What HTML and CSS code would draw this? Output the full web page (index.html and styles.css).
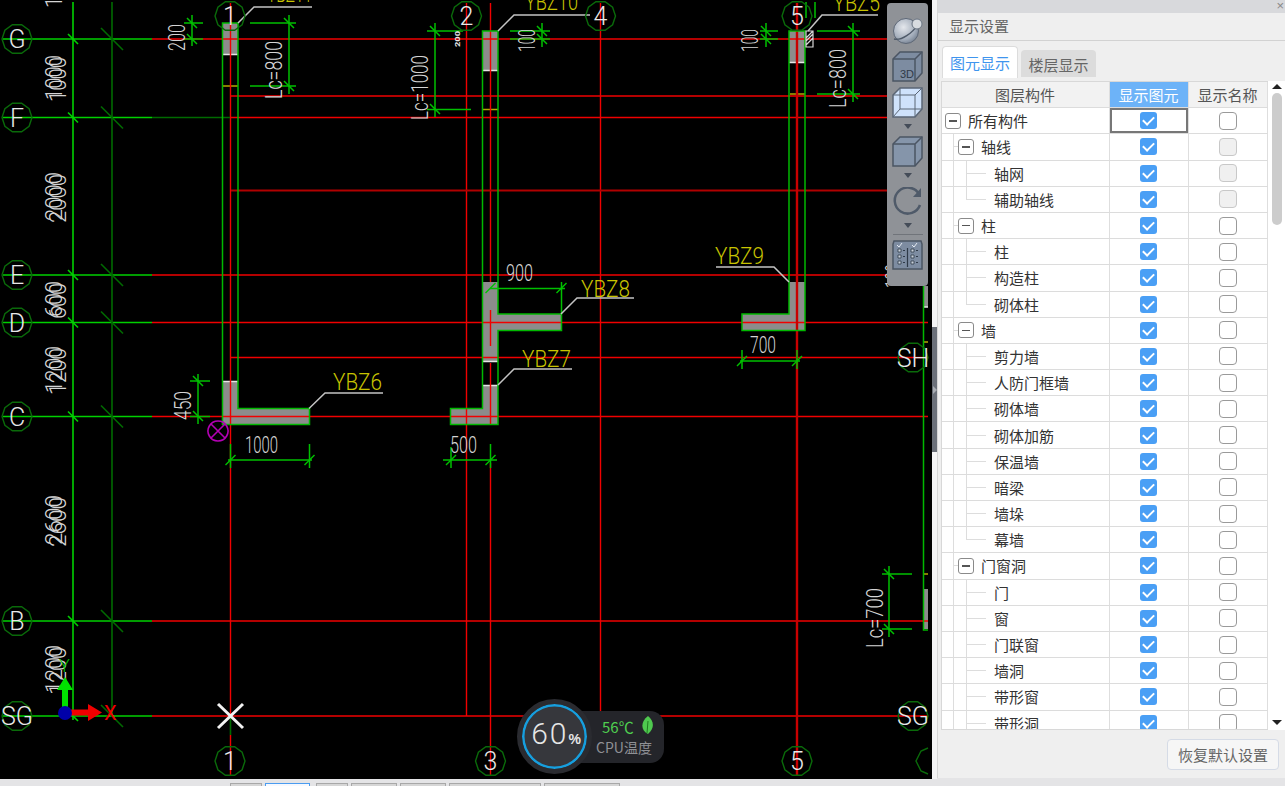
FILE: index.html
```html
<!DOCTYPE html>
<html lang="zh">
<head>
<meta charset="utf-8">
<title>显示设置</title>
<link rel="stylesheet" href="styles.css">
</head>
<body>
<div class="main">
  <div class="canvas">
    <svg class="cad" width="932" height="779" viewBox="0 0 932 779">
      <defs>
        <polygon id="ax" points="15,0 12.1,8.8 4.6,14.3 -4.6,14.3 -12.1,8.8 -15,0 -12.1,-8.8 -4.6,-14.3 4.6,-14.3 12.1,-8.8"/>
        <path id="tb" d="M-5-5 5 5"/>
        <path id="tf" d="M-5 5 5-5"/>
        <path id="tl" d="M-11-11 11 11"/>
      </defs>

      <g class="gray">
        <rect x="223" y="23" width="15" height="32"/>
        <polygon points="223,381 238,381 238,408.5 309,408.5 309,424 223,424"/>
        <rect x="483" y="31" width="15" height="40"/>
        <polygon points="483,282 498,282 498,314 561,314 561,330 498,330 498,361 483,361"/>
        <polygon points="483,385 498,385 498,424 451,424 451,409 483,409"/>
        <rect x="789" y="31" width="16" height="32"/>
        <polygon points="789,282 805,282 805,330 742,330 742,314 789,314"/>
        <rect x="924" y="589" width="4" height="40"/>
        <rect x="924" y="286" width="4" height="21"/>
      </g>
      <path class="end" d="M223 54.500H238M223 381.500H238M483 70.500H498M483 361.500H498M483 385.500H498M789 62.500H805M924 307H928"/>
      <path class="yel-line" d="M223 86H238M483 109.500H498M790 94H805M924 342H928M924 574H928"/>

      <path class="red" d="M152 39H928M230 96H928M230 117.500H928M152 275H928M152 322.500H928M231 357.500H928M152 416.500H928M152 621H928M152 716H928M230.500 3V716M230.500 735V775M466.500 3V716M490.500 3V282M490.500 310V346M490.500 363V424M490.500 463V775M600.500 3V716"/>
      <path class="red-dark" d="M231 190.500H928"/>
      <path class="red-wide" d="M797 3V775"/>

      <path class="green" d="M3 39H152M3 117.500H152M3 275H152M3 322.500H152M3 416.500H152M3 621H152M3 716H152M73 2V720"/>
      <path class="green-dark" d="M112 2V716M152 117.500H230M230.500 716V735"/>
      <g class="green-dark">
        <use href="#tl" x="112" y="39"/><use href="#tl" x="112" y="117.500"/><use href="#tl" x="112" y="275"/><use href="#tl" x="112" y="322.500"/><use href="#tl" x="112" y="416.500"/><use href="#tl" x="112" y="621"/><use href="#tl" x="112" y="716"/>
      </g>
      <g class="green">
        <use href="#tb" x="73" y="39"/><use href="#tb" x="73" y="117.500"/><use href="#tb" x="73" y="275"/><use href="#tb" x="73" y="322.500"/><use href="#tb" x="73" y="416.500"/><use href="#tb" x="73" y="621"/><use href="#tb" x="73" y="716"/>
      </g>

      <path class="wall" d="M222.500 23V424.500H309.500V408.500H238V23ZM482.500 31H498V314H561.500V330.500H498V424.500H450.500V408.500H482.500ZM789 31V314H742V330.500H805V31ZM923.500 286V630H928"/>

      <path class="dim" d="M184 23H203M184 39H203M192 15V46M250 23H296M250 86H296M289 15V94M190 381H210M190 416.500H210M198 374V424M228 460H312M230.500 444V468M309.500 444V468M427 31H463M427 109.500H471M435 23V117M510 31H550M510 39H550M542 23V47M490 288.500H565M561.500 282V314M443 460H497M451 447V468M490.500 444V468M760 31H778M760 39H778M766 23V47M817 31H860M817 94H860M853 23V102M806 2V18M815 2V18M740 361H800M742 350V369M797 350V369M882 574H912M882 629H912M889 566V637"/>
      <g class="dim">
        <use href="#tb" x="192" y="23"/><use href="#tb" x="192" y="39"/><use href="#tb" x="289" y="23"/><use href="#tb" x="289" y="86"/><use href="#tb" x="198" y="381"/><use href="#tb" x="198" y="416"/>
        <use href="#tf" x="230.500" y="460"/><use href="#tf" x="309.500" y="460"/><use href="#tb" x="435" y="31"/><use href="#tb" x="435" y="109"/><use href="#tb" x="542" y="31"/><use href="#tb" x="542" y="39"/>
        <use href="#tf" x="490.500" y="288"/><use href="#tf" x="561.500" y="288"/><use href="#tf" x="451" y="460"/><use href="#tf" x="490.500" y="460"/><use href="#tb" x="766" y="31"/><use href="#tb" x="766" y="39"/>
        <use href="#tb" x="853" y="31"/><use href="#tb" x="853" y="94"/><use href="#tf" x="742" y="361"/><use href="#tf" x="797" y="361"/><use href="#tb" x="889" y="574"/><use href="#tb" x="889" y="629"/>
      </g>

      <path class="leader" d="M309 408.500 325 393H383M498 385 514 369H572M561 314 577 298H634M789 282 774 267H716M498 31 514 15H590M808 31 822 15H878M238 23 254 7H312"/>

      <g class="axis">
        <use href="#ax" x="230" y="16"/><use href="#ax" x="466.500" y="16"/><use href="#ax" x="600.500" y="16"/><use href="#ax" x="797" y="16"/>
        <use href="#ax" x="230" y="761"/><use href="#ax" x="490.500" y="761"/><use href="#ax" x="797" y="761"/>
        <use href="#ax" x="17" y="39"/><use href="#ax" x="17" y="117.500"/><use href="#ax" x="17" y="275"/><use href="#ax" x="17" y="322.500"/><use href="#ax" x="17" y="416.500"/><use href="#ax" x="17" y="621"/><use href="#ax" x="17" y="716"/>
        <use href="#ax" x="913" y="357.500"/><use href="#ax" x="913" y="716"/>
        <path d="M928 748 921 751 916 761 921 771 928 774"/>
      </g>

      <g class="lab">
        <text x="230" y="25">1</text><text x="466.500" y="25">2</text><text x="600.500" y="25">4</text><text x="797" y="25">5</text>
        <text x="230" y="770">1</text><text x="490.500" y="770">3</text><text x="797" y="770">5</text>
        <text x="17" y="48">G</text><text x="17" y="126.500">F</text><text x="17" y="284">E</text><text x="17" y="331.500">D</text><text x="17" y="425.500">C</text><text x="17" y="630">B</text><text x="17" y="725">SG</text>
        <text x="913" y="366.500">SH</text><text x="913" y="725">SG</text>
      </g>

      <g class="txt">
        <text transform="translate(62,8) rotate(-90)" textLength="45" lengthAdjust="spacingAndGlyphs">1000</text>
        <text transform="translate(62,100) rotate(-90)" textLength="45" lengthAdjust="spacingAndGlyphs">1000</text>
        <text transform="translate(66,102) rotate(-90)" textLength="45" lengthAdjust="spacingAndGlyphs">1000</text>
        <text transform="translate(62,221) rotate(-90)" textLength="49" lengthAdjust="spacingAndGlyphs">2000</text>
        <text transform="translate(66,223) rotate(-90)" textLength="49" lengthAdjust="spacingAndGlyphs">2000</text>
        <text transform="translate(62,317) rotate(-90)" textLength="36" lengthAdjust="spacingAndGlyphs">600</text>
        <text transform="translate(66,319) rotate(-90)" textLength="36" lengthAdjust="spacingAndGlyphs">600</text>
        <text transform="translate(62,393) rotate(-90)" textLength="47" lengthAdjust="spacingAndGlyphs">1200</text>
        <text transform="translate(66,395) rotate(-90)" textLength="47" lengthAdjust="spacingAndGlyphs">1200</text>
        <text transform="translate(62,545) rotate(-90)" textLength="50" lengthAdjust="spacingAndGlyphs">2600</text>
        <text transform="translate(66,547) rotate(-90)" textLength="50" lengthAdjust="spacingAndGlyphs">2600</text>
        <text transform="translate(62,693) rotate(-90)" textLength="48" lengthAdjust="spacingAndGlyphs">1200</text>
        <text transform="translate(66,695) rotate(-90)" textLength="48" lengthAdjust="spacingAndGlyphs">1200</text>
        <text transform="translate(185,51) rotate(-90)" textLength="27" lengthAdjust="spacingAndGlyphs">200</text>
        <text transform="translate(282,99) rotate(-90)" textLength="58" lengthAdjust="spacingAndGlyphs">Lc=800</text>
        <text transform="translate(428,120) rotate(-90)" textLength="65" lengthAdjust="spacingAndGlyphs">Lc=1000</text>
        <text transform="translate(535,52) rotate(-90)" textLength="23" lengthAdjust="spacingAndGlyphs">100</text>
        <text transform="translate(758,52) rotate(-90)" textLength="23" lengthAdjust="spacingAndGlyphs">100</text>
        <text transform="translate(846,108) rotate(-90)" textLength="59" lengthAdjust="spacingAndGlyphs">Lc=800</text>
        <text transform="translate(883,648) rotate(-90)" textLength="60" lengthAdjust="spacingAndGlyphs">Lc=700</text>
        <text transform="translate(191,420) rotate(-90)" textLength="29" lengthAdjust="spacingAndGlyphs">450</text>
        <text transform="translate(902,288) rotate(-90)" textLength="24" lengthAdjust="spacingAndGlyphs">100</text>
        <text x="245" y="453" textLength="33" lengthAdjust="spacingAndGlyphs">1000</text>
        <text x="506" y="281" textLength="27" lengthAdjust="spacingAndGlyphs">900</text>
        <text x="450" y="453" textLength="27" lengthAdjust="spacingAndGlyphs">500</text>
        <text x="750" y="353" textLength="26" lengthAdjust="spacingAndGlyphs">700</text>
        <text class="tiny" transform="translate(460,47) rotate(-90)" textLength="16" lengthAdjust="spacingAndGlyphs">200</text>
      </g>
      <path class="hatch" d="M806 31H813V47H806ZM806 38 813 31M806 45 813 38M806 41 813 34"/>

      <g class="yb">
        <text x="333" y="390" textLength="49" lengthAdjust="spacingAndGlyphs">YBZ6</text>
        <text x="522" y="367" textLength="49" lengthAdjust="spacingAndGlyphs">YBZ7</text>
        <text x="581" y="297" textLength="49" lengthAdjust="spacingAndGlyphs">YBZ8</text>
        <text x="715" y="264" textLength="49" lengthAdjust="spacingAndGlyphs">YBZ9</text>
        <text x="525" y="10" textLength="53" lengthAdjust="spacingAndGlyphs">YBZ10</text>
        <text x="833" y="11" textLength="47" lengthAdjust="spacingAndGlyphs">YBZ5</text>
        <text x="267" y="2" textLength="45" lengthAdjust="spacingAndGlyphs">YBZ11</text>
      </g>

      <path class="mag" d="M218 421a10 10 0 1 0 .01 0ZM211 424 225 438M225 424 211 438"/>
      <path class="snap" d="M218 704 243 728M243 704 218 728"/>

      <path class="arrow-g" d="M62 713V690H57L65 677 73 690H68V713Z"/>
      <path class="arrow-r" d="M66 709.500H88V704L102 712.500 88 721V715.500H66Z"/>
      <circle class="origin" cx="65" cy="713" r="7"/>
      <text class="lab-x" x="104" y="720">X</text>
      <text class="lab-y" x="59" y="672">Y</text>
    </svg>

    <div class="toolbar">
      <svg class="ic-sphere" width="30" height="28" viewBox="0 0 30 28"><defs><radialGradient id="sph" cx="0.4" cy="0.35" r="0.8"><stop offset="0" stop-color="#e4e7ec"/><stop offset="0.6" stop-color="#a3adbb"/><stop offset="1" stop-color="#5f6b7c"/></radialGradient></defs><circle cx="13" cy="15" r="12.500" fill="url(#sph)" stroke="#5d6776"/><path d="M1 23C8 25 20 17 25 8" fill="none" stroke="#4f5a69" stroke-width="1.500"/><circle cx="24" cy="8" r="5" fill="#d7dbe0" stroke="#6a7482"/></svg>
      <svg class="ic-3d" width="31" height="31" viewBox="0 0 31 31"><path d="M1 8 8 1H30V22L23 30H1Z" fill="#7d8ca1" stroke="#4b5563" stroke-width="1.500"/><path d="M1 8H23V30M23 8 30 1" fill="none" stroke="#4b5563" stroke-width="1.500"/><text class="ic-text" x="8" y="27">3D</text></svg>
      <svg class="ic-gap" width="31" height="31" viewBox="0 0 31 31"><path d="M1 8 8 1H30V22L23 30H1Z" fill="#cfe2fb" stroke="#5b6675" stroke-width="1.500"/><path d="M1 8H23V30M23 8 30 1M8 1V22H30M8 22 1 30" fill="none" stroke="#5b6675"/></svg>
      <span class="ic-arrow first"></span>
      <svg class="ic-gap2" width="31" height="31" viewBox="0 0 31 31"><path d="M1 8 8 1H30V22L23 30H1Z" fill="#8595aa" stroke="#4b5563" stroke-width="1.500"/><path d="M1 8H23V30M23 8 30 1" fill="none" stroke="#4b5563" stroke-width="1.500"/></svg>
      <span class="ic-arrow"></span>
      <svg class="ic-rot" width="30" height="28" viewBox="0 0 30 28"><path d="M26 7A13 13 0 1 0 27 18" fill="none" stroke="#4f5a69" stroke-width="2.500"/><path d="M28 1V10H20Z" fill="#4f5a69"/></svg>
      <span class="ic-arrow third"></span>
      <span class="tool-sep"></span>
      <svg class="ic-list" width="31" height="30" viewBox="0 0 31 30"><path d="M2 1H29L30 4V29H1V4Z" fill="#7d8ca1" stroke="#4b5563" stroke-width="1.500"/><path d="M15.500 8V27M11 10.500H13M11 16.500H13M11 22.500H13M24 10.500H26M24 16.500H26M24 22.500H26" fill="none" stroke="#2f3a48" stroke-width="1.200"/><path d="M6 9H9V12H6ZM6 15H9V18H6ZM6 21H9V24H6ZM19 9H22V12H19ZM19 15H22V18H19ZM19 21H22V24H19Z" fill="#c8d0da" stroke="#2f3a48" stroke-width="0.800"/><path d="M5 5 7 7 10 3M20 5 22 7 25 3" fill="none" stroke="#e4eaf2"/></svg>
    </div>

    <div class="cpu">
      <div class="cpu-ring"><span class="cpu-val">60</span><span class="cpu-pct">%</span></div>
      <div class="cpu-info">
        <div class="cpu-temp">56℃<svg class="cpu-leaf" width="13" height="18" viewBox="0 0 13 18"><path d="M7 0C13 5 14 12 7 18 0 15-1 6 7 0Z" fill="#4fc94f"/><path d="M7 5 6 17" stroke="#1f7a1f" fill="none"/></svg></div>
        <div class="cpu-name">CPU温度</div>
      </div>
    </div>
  </div>

  <div class="splitter"><div class="handle"><span class="handle-arrow"></span></div></div>

  <aside class="panel">
    <div class="topbar"><span class="close">×</span></div>
    <div class="title">显示设置</div>
    <div class="tabs"><div class="tab active">图元显示</div><div class="tab">楼层显示</div></div>
    <div class="body">
      <div class="table">
        <div class="row head"><div class="cell">图层构件</div><div class="cell hl">显示图元</div><div class="cell">显示名称</div></div>
        <div class="row"><div class="cell name root"><span class="exp"></span>所有构件</div><div class="cell sel"><span class="cb on"></span></div><div class="cell"><span class="cb"></span></div></div>
        <div class="row"><div class="cell name group"><span class="exp"></span>轴线</div><div class="cell"><span class="cb on"></span></div><div class="cell"><span class="cb off"></span></div></div>
        <div class="row"><div class="cell name leaf">轴网</div><div class="cell"><span class="cb on"></span></div><div class="cell"><span class="cb off"></span></div></div>
        <div class="row"><div class="cell name leaf last">辅助轴线</div><div class="cell"><span class="cb on"></span></div><div class="cell"><span class="cb off"></span></div></div>
        <div class="row"><div class="cell name group"><span class="exp"></span>柱</div><div class="cell"><span class="cb on"></span></div><div class="cell"><span class="cb"></span></div></div>
        <div class="row"><div class="cell name leaf">柱</div><div class="cell"><span class="cb on"></span></div><div class="cell"><span class="cb"></span></div></div>
        <div class="row"><div class="cell name leaf">构造柱</div><div class="cell"><span class="cb on"></span></div><div class="cell"><span class="cb"></span></div></div>
        <div class="row"><div class="cell name leaf last">砌体柱</div><div class="cell"><span class="cb on"></span></div><div class="cell"><span class="cb"></span></div></div>
        <div class="row"><div class="cell name group"><span class="exp"></span>墙</div><div class="cell"><span class="cb on"></span></div><div class="cell"><span class="cb"></span></div></div>
        <div class="row"><div class="cell name leaf">剪力墙</div><div class="cell"><span class="cb on"></span></div><div class="cell"><span class="cb"></span></div></div>
        <div class="row"><div class="cell name leaf">人防门框墙</div><div class="cell"><span class="cb on"></span></div><div class="cell"><span class="cb"></span></div></div>
        <div class="row"><div class="cell name leaf">砌体墙</div><div class="cell"><span class="cb on"></span></div><div class="cell"><span class="cb"></span></div></div>
        <div class="row"><div class="cell name leaf">砌体加筋</div><div class="cell"><span class="cb on"></span></div><div class="cell"><span class="cb"></span></div></div>
        <div class="row"><div class="cell name leaf">保温墙</div><div class="cell"><span class="cb on"></span></div><div class="cell"><span class="cb"></span></div></div>
        <div class="row"><div class="cell name leaf">暗梁</div><div class="cell"><span class="cb on"></span></div><div class="cell"><span class="cb"></span></div></div>
        <div class="row"><div class="cell name leaf">墙垛</div><div class="cell"><span class="cb on"></span></div><div class="cell"><span class="cb"></span></div></div>
        <div class="row"><div class="cell name leaf last">幕墙</div><div class="cell"><span class="cb on"></span></div><div class="cell"><span class="cb"></span></div></div>
        <div class="row"><div class="cell name group"><span class="exp"></span>门窗洞</div><div class="cell"><span class="cb on"></span></div><div class="cell"><span class="cb"></span></div></div>
        <div class="row"><div class="cell name leaf">门</div><div class="cell"><span class="cb on"></span></div><div class="cell"><span class="cb"></span></div></div>
        <div class="row"><div class="cell name leaf">窗</div><div class="cell"><span class="cb on"></span></div><div class="cell"><span class="cb"></span></div></div>
        <div class="row"><div class="cell name leaf">门联窗</div><div class="cell"><span class="cb on"></span></div><div class="cell"><span class="cb"></span></div></div>
        <div class="row"><div class="cell name leaf">墙洞</div><div class="cell"><span class="cb on"></span></div><div class="cell"><span class="cb"></span></div></div>
        <div class="row"><div class="cell name leaf">带形窗</div><div class="cell"><span class="cb on"></span></div><div class="cell"><span class="cb"></span></div></div>
        <div class="row"><div class="cell name leaf">带形洞</div><div class="cell"><span class="cb on"></span></div><div class="cell"><span class="cb"></span></div></div>
      </div>
      <div class="scroll"><span class="sc-up"></span><span class="sc-thumb"></span><span class="sc-down"></span></div>
    </div>
    <div class="foot"><button class="reset">恢复默认设置</button></div>
  </aside>
</div>
<div class="strip">
  <span class="st w32"></span><span class="st w45 cur"></span><span class="st w32 m6"></span><span class="st w46"></span><span class="st w46"></span><span class="st w92"></span><span class="st w76"></span>
</div>
</body>
</html>
```

FILE: styles.css
```css
* { box-sizing: border-box; }
html, body { margin: 0; padding: 0; }
body {
  width: 1285px;
  height: 786px;
  overflow: hidden;
  background: #e4e4e6;
  font-family: "Noto Sans CJK SC", "Noto Sans", sans-serif;
}
.main { display: flex; height: 779px; }

/* canvas */
.canvas { position: relative; width: 932px; height: 779px; background: #000; flex: none; }
.cad { display: block; }
.cad path, .cad use, .cad polygon { fill: none; }
.gray rect, .cad .gray polygon { fill: #8c8c8c; stroke: none; }
.end { stroke: #e6e6e6; stroke-width: 1.5; }
.yel-line { stroke: #b5a800; stroke-width: 1.5; }
.red { stroke: #f00000; stroke-width: 1.4; }
.red-dark { stroke: #b00000; stroke-width: 2; }
.red-wide { stroke: #c80000; stroke-width: 2.4; }
.green { stroke: #00d000; stroke-width: 1.6; }
.green-dark { stroke: #006a00; stroke-width: 1.6; }
.wall { stroke: #00b800; stroke-width: 1.5; }
.dim { stroke: #00c000; stroke-width: 1.5; }
.leader { stroke: #c4c4c4; stroke-width: 1.5; }
.axis { stroke: #0a6a0a; stroke-width: 1.4; }
.hatch { stroke: #d8d8d8; stroke-width: 1.2; }
.mag { stroke: #b400b4; stroke-width: 1.6; }
.snap { stroke: #f2f2f2; stroke-width: 3; }
.cad .arrow-g { fill: #00e000; }
.cad .arrow-r { fill: #f00000; }
.origin { fill: #0000a8; }
.lab text, .txt text, .yb text, .lab-x, .lab-y { font-family: "Roboto", "Liberation Sans", sans-serif; font-weight: 300; }
.lab text { fill: #e8e8e8; font-size: 25px; text-anchor: middle; }
.txt text { fill: #d4d4d4; font-size: 24px; }
.txt .tiny { font-size: 8px; font-weight: 700; fill: #e8e8e8; }
.yb text { fill: #c8c400; font-size: 24px; }
.lab-x { fill: #f00000; font-size: 20px; font-weight: 400; }
.lab-y { fill: #00c000; font-size: 18px; }

/* toolbar */
.toolbar {
  position: absolute;
  left: 887px;
  top: 3px;
  width: 41px;
  height: 283px;
  padding-top: 13px;
  background: #8f9297;
  border-radius: 4px;
  display: flex;
  flex-direction: column;
  align-items: center;
}
.toolbar svg { flex: none; display: block; }
.ic-3d { margin-top: 7px; }
.ic-gap { margin-top: 5px; }
.ic-gap2 { margin-top: 7px; }
.ic-rot { margin-top: 9px; }
.ic-list { margin-top: 5px; }
.ic-text { font-family: "Liberation Sans", sans-serif; font-size: 11px; fill: #2f3a48; }
.ic-arrow { margin-top: 6px; width: 0; height: 0; border-left: 4px solid transparent; border-right: 4px solid transparent; border-top: 5px solid #444c58; flex: none; }
.ic-arrow.third { margin-top: 8px; }
.tool-sep { margin-top: 6px; width: 30px; height: 1px; background: #70747a; flex: none; }

/* cpu widget */
.cpu { position: absolute; left: 517px; top: 699px; display: flex; align-items: center; }
.cpu-ring {
  position: relative;
  z-index: 1;
  width: 75px;
  height: 75px;
  border-radius: 50%;
  border: 5px solid #2a2b30;
  background: #36373c;
  box-shadow: inset 0 0 0 2.500px #169fdf;
  display: flex;
  align-items: baseline;
  justify-content: center;
  padding: 12px 0 0 3px;
  color: #e6e6e6;
}
.cpu-val { font-family: "Roboto", sans-serif; font-weight: 300; font-size: 30px; letter-spacing: 2px; line-height: 36px; }
.cpu-pct { font-family: "Liberation Sans", sans-serif; font-weight: 700; font-size: 14px; }
.cpu-info {
  width: 84px;
  height: 52px;
  margin-left: -12px;
  padding: 5px 8px 0 12px;
  background: #24252a;
  border-radius: 0 14px 14px 0;
  text-align: center;
  display: flex;
  flex-direction: column;
}
.cpu-temp { display: flex; align-items: center; color: #4fcf50; font-size: 15px; line-height: 21px; height: 21px; padding-left: 10px; gap: 7px; }
.cpu-name { color: #8f9095; font-size: 14px; line-height: 20px; white-space: nowrap; }
.cpu-leaf { flex: none; margin-top: -3px; }

/* splitter */
.splitter { width: 5px; flex: none; background: #f4f4f5; padding-top: 327px; }
.handle { height: 125px; background: #6b7079; display: flex; align-items: center; justify-content: center; }
.handle-arrow { width: 0; height: 0; border-top: 4px solid transparent; border-bottom: 4px solid transparent; border-left: 4px solid #a8acb2; }

/* panel */
.panel { width: 348px; flex: none; height: 778px; background: #efefef; display: flex; flex-direction: column; border-left: 1px solid #d6d6d6; }
.topbar { height: 13px; background: #d8d9dc; display: flex; justify-content: flex-end; flex: none; }
.close { font-size: 13px; line-height: 12px; color: #888; padding-right: 1px; font-family: "Liberation Sans", sans-serif; }
.title { height: 28px; flex: none; padding-left: 11px; font-size: 15px; line-height: 26px; color: #666; border-bottom: 1px solid #d2d2d2; }
.tabs { height: 37px; margin-bottom: 3px; padding-left: 4px; flex: none; display: flex; align-items: flex-end; gap: 3px; }
.tab { width: 75px; height: 27px; margin-bottom: 1px; background: #dcdcdc; border-radius: 4px 4px 0 0; font-size: 15px; line-height: 29px; text-align: center; color: #666; }
.tab.active { width: 76px; height: 32px; margin-bottom: 0; line-height: 31px; background: #fff; color: #3f95ee; border: 1px solid #dcdcdc; border-bottom: 0; }
.body { display: flex; height: 649px; flex: none; padding-left: 3px; }
.table { width: 327px; height: 649px; overflow: hidden; background: #fff; border: 1px solid #d8d8d8; border-right: 0; flex: none; }
.row { display: grid; grid-template-columns: 168px 79px 79px; height: 26.200px; border-bottom: 1px solid #dcdcdc; }
.cell { display: flex; align-items: center; justify-content: center; padding-right: 1px; border-right: 1px solid #dedede; font-size: 15px; color: #333; white-space: nowrap; }
.head .cell { background: #f2f2f2; color: #555; }
.head .hl { background: #6db3f8; color: #fff; }
.name { justify-content: flex-start; }
.sel { box-shadow: inset 0 0 0 2px #777; }
.root { padding-left: 3px; }
.exp {
  width: 16px;
  height: 16px;
  margin-right: 7px;
  flex: none;
  background: #fff;
  border: 1px solid #8a8a8a;
  border-radius: 3px;
  display: flex;
  align-items: center;
  justify-content: center;
}
.exp::after { content: ""; width: 8px; height: 1.500px; background: #555; }
.group {
  padding-left: 16px;
  background:
    linear-gradient(#ddd, #ddd) 11px 0 / 1px 100% no-repeat,
    linear-gradient(#ddd, #ddd) 11px 50% / 6px 1px no-repeat,
    #fff;
}
.leaf {
  padding-left: 52px;
  background:
    linear-gradient(#ddd, #ddd) 11px 0 / 1px 100% no-repeat,
    linear-gradient(#ddd, #ddd) 24px 0 / 1px 100% no-repeat,
    linear-gradient(#ddd, #ddd) 24px 50% / 20px 1px no-repeat,
    #fff;
}
.leaf.last {
  background:
    linear-gradient(#ddd, #ddd) 11px 0 / 1px 100% no-repeat,
    linear-gradient(#ddd, #ddd) 24px 0 / 1px 50% no-repeat,
    linear-gradient(#ddd, #ddd) 24px 50% / 20px 1px no-repeat,
    #fff;
}
.cb { width: 18px; height: 18px; border: 1.500px solid #9a9a9a; border-radius: 4px; background: #fff; display: flex; align-items: center; justify-content: center; }
.cb.on { width: 17px; height: 17px; background: #4a9ff5; border: 0; border-radius: 3px; }
.cb.on::after { content: ""; width: 5px; height: 9px; border: solid #fff; border-width: 0 2px 2px 0; transform: rotate(45deg); margin-top: -2px; }
.cb.off { background: #f0f0f0; border-color: #c8c8c8; }

.scroll { width: 17px; flex: none; background: #fff; display: flex; flex-direction: column; align-items: center; height: 649px; padding-top: 3px; }
.sc-up { width: 0; height: 0; border-left: 5px solid transparent; border-right: 5px solid transparent; border-bottom: 5px solid #222; flex: none; }
.sc-thumb { width: 10px; height: 132px; margin-top: 4px; background: #ccc; border-radius: 5px; flex: none; }
.sc-down { width: 0; height: 0; border-left: 5px solid transparent; border-right: 5px solid transparent; border-top: 5px solid #222; flex: none; margin-top: auto; margin-bottom: 5px; }
.foot { flex: 1; display: flex; justify-content: flex-end; padding: 9px 6px 0 0; }
.reset { width: 112px; height: 31px; padding: 0; background: #f6f6f6; border: 1px solid #d5dbe6; border-radius: 4px; font-family: "Noto Sans CJK SC", sans-serif; font-size: 15px; color: #666; }

/* bottom strip */
.strip { height: 7px; display: flex; align-items: flex-start; gap: 3px; padding: 4px 0 0 230px; background: #e4e4e6; overflow: hidden; }
.st { height: 8px; background: #d6d6d6; border: 1px solid #a8a8a8; flex: none; }
.st.cur { background: #f6f9ff; border-color: #4a9cf0; }
.w32 { width: 32px; }
.w45 { width: 45px; }
.w46 { width: 46px; }
.w92 { width: 92px; }
.w76 { width: 76px; }
.m6 { margin-left: 3px; }
```
